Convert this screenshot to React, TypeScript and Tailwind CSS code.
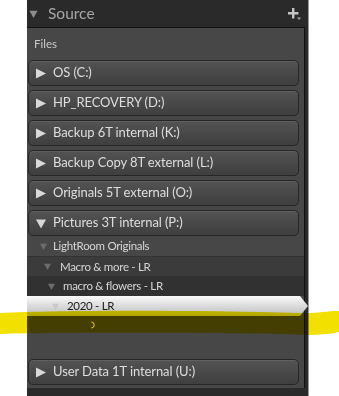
import React from "react";

const drives = [
  "OS (C:)",
  "HP_RECOVERY (D:)",
  "Backup 6T internal (K:)",
  "Backup Copy 8T external (L:)",
  "Originals 5T external (O:)",
];

function Tri({ open, className }: { open?: boolean; className?: string }) {
  return (
    <svg viewBox="0 0 10 10" className={className}>
      {open ? (
        <path d="M0 1 L10 1 L5 10 Z" fill="currentColor" />
      ) : (
        <path d="M0 0 L10 5 L0 10 Z" fill="currentColor" />
      )}
    </svg>
  );
}

function DriveRow({ label, open }: { label: string; open?: boolean }) {
  return (
    <div className="h-[26px] ml-px w-[271px] flex items-center rounded-[5px] border border-[#262626] bg-gradient-to-b from-[#535353] to-[#3f3f3f] shadow-[inset_0_1px_0_rgba(255,255,255,0.08)]">
      <Tri open={open} className="w-[10px] h-[11px] ml-[7px] text-[#d8d8d8]" />
      <span className="ml-[7px] text-[13px] text-[#dedede] tracking-[-0.1px]">{label}</span>
    </div>
  );
}

function SubRow({
  label,
  indent,
  gap,
  bg,
}: {
  label: string;
  indent: number;
  gap: number;
  bg: string;
}) {
  return (
    <div className={`h-[20px] flex items-center ${bg}`}>
      <div style={{ width: indent }} />
      <Tri open className="w-[7px] h-[7px] text-[#6c6c6c]" />
      <span style={{ marginLeft: gap }} className="text-[11.5px] text-[#d6d6d6] tracking-[-0.3px]">
        {label}
      </span>
    </div>
  );
}

export default function App() {
  return (
    <div className="relative w-[339px] h-[396px] bg-white overflow-hidden font-['Lato','Liberation_Sans',sans-serif]">
      <div className="ml-[27px] w-[282px] h-full bg-[#2a2a2a] border-r border-[#9a9a9a] flex flex-col">
        {/* header */}
        <div className="h-[27px] flex items-center shrink-0">
          <Tri open className="w-[9px] h-[8px] ml-[2px] text-[#8e8e8e]" />
          <span className="ml-[10px] text-[15.5px] text-[#a6a6a6]">Source</span>
          <div className="ml-auto mr-[7px] relative w-[13px] h-[12px]">
            <svg viewBox="0 0 13 12" className="w-[13px] h-[12px]">
              <path d="M4 0 h2.4 v4 h4 v2.4 h-4 v4 h-2.4 v-4 h-4 v-2.4 h4 Z" fill="#c4c4c4" />
              <path d="M9 9.5 h4 l-2 2.5 Z" fill="#a8a8a8" />
            </svg>
          </div>
        </div>

        {/* content box */}
        <div className="w-[278px] h-[361px] bg-[#474747] border-t border-r border-[#111] flex flex-col">
          <div className="h-[32px] flex items-center pl-[7px] text-[11.5px] text-[#c8c8c8]">Files</div>
          <div className="flex flex-col gap-[4px]">
            {drives.map((d) => (
              <DriveRow key={d} label={d} />
            ))}
            <DriveRow label="Pictures 3T internal (P:)" open />
          </div>
          <SubRow label="LightRoom Originals" indent={13} gap={6} bg="bg-[#474747]" />
          <SubRow label="Macro & more - LR" indent={17} gap={9} bg="bg-[#3b3b3b] border-t border-[#333]" />
          <SubRow label="macro & flowers - LR" indent={21} gap={8} bg="bg-[#313131]" />
          <div className="h-[20px] w-[281px] flex items-center bg-gradient-to-b from-[#fafafa] to-[#bdbdbd] [clip-path:polygon(0_0,273px_0,281px_50%,273px_100%,0_100%)]">
            <div className="w-[25px]" />
            <Tri open className="w-[7px] h-[7px] text-[#c8c8c8]" />
            <span className="ml-[8px] text-[11.5px] text-[#1a1a1a] tracking-[-0.3px]">2020 - LR</span>
          </div>
          <div className="h-[20px] bg-[#474747] relative">
            <svg viewBox="0 0 10 12" className="absolute left-[63px] top-[4px] w-[6px] h-[10px]">
              <path d="M2 1 A5 5 0 0 1 2 11" stroke="#f0f0f0" strokeWidth="1.6" fill="none" />
            </svg>
          </div>
          <div className="h-[23px]" />
          <DriveRow label="User Data 1T internal (U:)" />
        </div>
      </div>

      {/* yellow marker scribble */}
      <svg
        viewBox="0 0 339 396"
        className="absolute inset-0 w-[339px] h-[396px] pointer-events-none mix-blend-multiply"
      >
        <path
          d="M0 313 C60 310 200 310 300 313 C315 314 325 311 339 311 L339 332 C322 336 300 335 280 334 C200 333 80 332 0 334 Z"
          fill="#f2e100"
        />
      </svg>
    </div>
  );
}
